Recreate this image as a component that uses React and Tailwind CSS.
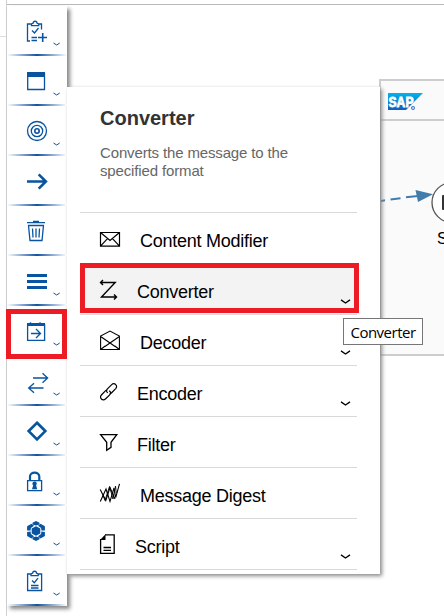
import React from "react";

const svgBase = { fill: "none", stroke: "currentColor", strokeWidth: 1.3 };

function ClipboardAddIcon() {
  return (
    <g>
      <path d="M7 6H3.5v17H6M14.5 6h3v5.5M7.5 7.6V6l1.7-.8C9.2 2.6 13 2.6 13 5.200l1.700.8v1.600z" />
      <path d="M8 12.500l2.500 2.500L14.500 10M7.500 19.500H13M7.500 22.500H13" />
      <path strokeWidth="1.600" d="M14 19.500h9M18.700 15v9" />
    </g>
  );
}

function WindowIcon() {
  return (
    <g>
      <path d="M3.700 5V21.500H20.500V5" />
      <path fill="currentColor" stroke="none" d="M3 4h18v5H3z" />
    </g>
  );
}

function TargetIcon() {
  return (
    <g>
      <circle cx="13" cy="13" r="9.500" />
      <circle cx="13" cy="13" r="5.700" />
      <circle cx="13" cy="13" r="2.200" strokeWidth="1.600" />
    </g>
  );
}

function ArrowIcon() {
  return <path strokeWidth="2.600" d="M3 13.500H22M14.700 6.300l7.200 7.200-7.200 7.200" />;
}

function TrashIcon() {
  return (
    <path d="M3 4.700h18M9 3.500h6M4 7.500h16M4.500 7.500L6 22.500h12L19.500 7.500M8.500 10.500l.5 9M12 10.500v9M15.500 10.500l-.5 9" />
  );
}

function LinesIcon() {
  return <path strokeWidth="3" d="M3 7.500h20M3 13.500h20M3 19.500h20" />;
}

function CalendarIcon() {
  return (
    <g>
      <path d="M3.600 6v16.400h17V6" />
      <path fill="currentColor" stroke="none" d="M3 5h2.500l1-1 1 1h7.500l1-1 1 1H21v3H3z" />
      <path d="M7 15.500h9.500M12 11l4.500 4.500L12 20" />
    </g>
  );
}

function SwapIcon() {
  return <path d="M9 10h15M18.500 5.300L23.600 10l-5.100 4.700M19.500 20H5M10 15.300L4.700 20l5.300 4.700" />;
}

function DiamondIcon() {
  return <path strokeWidth="2.700" d="M13 4.800l8.300 8.300L13 21.400l-8.300-8.300z" />;
}

function LockIcon() {
  return (
    <g>
      <path d="M3.600 12.600h14v10h-14z" />
      <path strokeWidth="2.200" d="M6 12V8.500c0-5.300 9.300-5.300 9.300 0V12" />
      <path fill="currentColor" stroke="none" d="M8.400 16a2.200 2.200 0 1 1 3.700 1.200l1.100 4H8l1.200-4a2 2 0 0 1-.8-1.200z" />
    </g>
  );
}

function HexClusterIcon() {
  return (
    <g fill="currentColor" stroke="none">
      <path d="M12 8.200l4.300 2.400v4.800L12 17.800l-4.300-2.400v-4.800z" />
      <path d="M12 3l3.500 1.800v1.700L12 7.600 8.500 6.500V4.800z" />
      <path d="M12 23l3.500-1.800v-1.700L12 18.400l-3.500 1.100v1.700z" />
      <path d="M7.500 5.800l2.500 2-3.100 2.300-.3 2.400H3.100V8.300z" />
      <path d="M16.500 5.800l-2.500 2 3.100 2.300.3 2.400h3.500V8.300z" />
      <path d="M7.500 20.500l2.500-2.200-3.100-2.300-.3-2.500-3.500.5v4z" />
      <path d="M16.500 20.500l-2.500-2.200 3.100-2.300.3-2.500 3.500.5v4z" />
    </g>
  );
}

function ClipboardIcon() {
  return (
    <g>
      <path d="M7 6H3.600v16.500h14V6H14M7 7.700V6l1.700-.8c0-2.600 3.800-2.600 3.800 0l1.700.8v1.700z" />
      <path d="M8 12.500l2.300 2.200L14 10.200M7 17.500h7.500M7 20h7.500" />
    </g>
  );
}

function MailIcon() {
  return <path d="M3.500 4.500h19v13.700h-19zM3.500 4.500l9.500 8 9.500-8M3.500 18.200l7-7.600M22.500 18.200l-7-7.600" strokeWidth="1.200" />;
}

function ZigzagIcon() {
  return <path strokeWidth="1.400" d="M3.800 3.500h14.400L4.500 18H19.300M6 1L3.500 3.500 6 6M17 15.500L19.500 18 17 20.500" />;
}

function OpenMailIcon() {
  return <path strokeWidth="1.100" d="M3.600 19.500h18.800V6L13 1 3.600 6zM3.600 6.500l14.500 10M22.400 6.500l-14.500 10M3.600 19.500l4.600-3.500M22.400 19.500L17.800 16" />;
}

function LinkIcon() {
  return (
    <g strokeWidth="1.200">
      <path d="M10.800 11.800c-1.600-1-1.700-2.600-.4-3.900L14.700 3.600c1.300-1.200 2.900-1.200 4 0 1.200 1.100 1.200 2.700 0 4L14.400 12c-.5.500-1.100.7-1.700.8" />
      <path d="M12.200 9.800c1.700 1 1.800 2.700.5 4L8.400 18c-1.300 1.200-2.900 1.200-4 0-1.200-1.100-1.200-2.700 0-4L8.600 9.700c.5-.5 1.100-.7 1.700-.7" />
    </g>
  );
}

function FunnelIcon() {
  return <path d="M3.600 2.700h16.200L14 10.300v5L9.700 18.200v-7.900z" />;
}

function DigestIcon() {
  return (
    <g strokeWidth="1.100">
      <path d="M3.300 18.500L9 6l4 12.500L17 5l1.700 9.500L22.500.8" />
      <path d="M3.200 6.500L8.800 17.500l4.200-13 5 11.500" />
      <path strokeWidth=".9" d="M6 12l2 5.500 4.500-14 3.500 12.500L18.500 3l.8 7" />
    </g>
  );
}

function ScriptIcon() {
  return (
    <g>
      <path d="M8 .8h9.200v18.500H3.600V5" />
      <path fill="currentColor" stroke="none" d="M3 6L8.500.3V6z" />
      <path d="M6.500 13.500h7.500M6.500 16.300h7.500" />
    </g>
  );
}

const tools = [
  { Icon: ClipboardAddIcon, more: true },
  { Icon: WindowIcon, more: true },
  { Icon: TargetIcon, more: true },
  { Icon: ArrowIcon },
  { Icon: TrashIcon },
  { Icon: LinesIcon, more: true },
  { Icon: CalendarIcon, more: true, marked: true },
  { Icon: SwapIcon, more: true },
  { Icon: DiamondIcon, more: true },
  { Icon: LockIcon, more: true },
  { Icon: HexClusterIcon, more: true },
  { Icon: ClipboardIcon, more: true },
];

const entries = [
  { label: "Content Modifier", Icon: MailIcon, pad: "pl-[19px]" },
  { label: "Converter", Icon: ZigzagIcon, pad: "pl-[16px]", more: true, marked: true },
  { label: "Decoder", Icon: OpenMailIcon, pad: "pl-[19px]", more: true },
  { label: "Encoder", Icon: LinkIcon, pad: "pl-[16px]", more: true },
  { label: "Filter", Icon: FunnelIcon, pad: "pl-[16px]" },
  { label: "Message Digest", Icon: DigestIcon, pad: "pl-[19px]" },
  { label: "Script", Icon: ScriptIcon, pad: "pl-[14px]", more: true },
];

function Tool({ Icon, more, marked }) {
  return (
    <div className="relative flex h-[50px] shrink-0 flex-col">
      <div className="flex h-12 pl-[17px] pt-3 text-[#0854a0]">
        <svg className="h-7 w-7 shrink-0" viewBox="0 0 28 28" {...svgBase}>
          <Icon />
        </svg>
        {more && (
          <svg className="mt-[24px] h-[5px] w-2 shrink-0" viewBox="0 0 8 5" {...svgBase} strokeWidth="1">
            <path d="M1.500 1L4.700 3l3-2" />
          </svg>
        )}
      </div>
      <div className="h-0.5 bg-linear-to-r from-white via-[#0854a0] to-white" />
      {marked && <div className="absolute -left-px top-[3px] z-10 h-[50px] w-[61px] border-5 border-[#ed1c24]" />}
    </div>
  );
}

function Entry({ label, Icon, pad, more, marked }) {
  return (
    <li className={"relative flex h-[51px] border-b border-[#d9d9d9] pl-[17px] " + (marked ? "bg-[#f3f3f3]" : "")}>
      <svg className="mt-[15px] h-6 w-6 shrink-0" viewBox="0 0 24 24" {...svgBase}>
        <Icon />
      </svg>
      <span className={"pt-[16px] text-[18px] leading-6 tracking-[-0.26px] whitespace-nowrap " + pad}>{label}</span>
      {more && (
        <svg className="ml-auto mr-[6px] mt-[35px] h-[6px] w-[11px]" viewBox="0 0 11 6" {...svgBase} strokeWidth="1.300">
          <path d="M1 .9L5.500 4 10 .9" />
        </svg>
      )}
      {marked && <div className="absolute -top-px left-0 h-[50px] w-[279px] border-5 border-[#ed1c24]" />}
    </li>
  );
}

function Canvas() {
  return (
    <div className="absolute left-[379px] top-[79px] h-[277px] w-[80px] border-2 border-[#cdcdcd] bg-[#fafafa]">
      <div className="flex h-[40px] items-start border-b-2 border-[#cdcdcd] pl-[7px] pt-[12px]">
        <svg className="h-[18px] w-[36px]" viewBox="0 0 36 18">
          <defs>
            <linearGradient id="brand" x1="0" y1="0" x2="0" y2="1">
              <stop offset="0" stopColor="#00b4ec" />
              <stop offset="1" stopColor="#185abd" />
            </linearGradient>
          </defs>
          <path fill="url(#brand)" d="M0 0h35L18 17H0z" />
          <text x=".5" y="13.600" fill="#fff" stroke="#fff" strokeWidth=".8" fontFamily="Liberation Sans, sans-serif" fontWeight="700" fontSize="14" textLength="25" lengthAdjust="spacingAndGlyphs">SAP</text>
          <circle cx="25" cy="15" r="1.700" fill="#a9c3ea" stroke="#3d75c9" strokeWidth=".8" />
        </svg>
      </div>
      <svg className="h-[130px] w-[63px]" viewBox="381 121 63 130">
        <path d="M377 201.500l8-1.200M390.500 199.500l10-1.300M406 197.300l12-1.300" stroke="#427cac" strokeWidth="2" />
        <path d="M415.500 190l17.500 4.300-15 7.700z" fill="#427cac" />
        <circle cx="452" cy="202.500" r="20" fill="#fff" stroke="#555" strokeWidth="1.300" />
        <rect x="442" y="195" width="10" height="15" rx="1" fill="#333" />
        <text x="437" y="244" fontFamily="Liberation Sans, sans-serif" fontSize="16">S</text>
      </svg>
    </div>
  );
}

export default function App() {
  return (
    <div className="relative flex h-[616px] w-[444px] overflow-hidden bg-white font-['Liberation_Sans',Arial,sans-serif] text-black">
      <div className="flex w-[7px] shrink-0 flex-col border-r border-[#d0d0d0]">
        <div className="h-[37px] border-b border-[#dedede]" />
      </div>
      <div className="h-[5px] flex-1 border-b border-[#b9b9b9]" />
      <Canvas />
      <div className="absolute left-[7px] top-[6px] flex items-start">
        <nav className="flex w-[60px] shrink-0 flex-col bg-white shadow-[3px_3px_4px_#888]">
          {tools.map((tool, i) => (
            <Tool key={i} {...tool} />
          ))}
        </nav>
        <section className="mt-[81px] flex h-[487px] w-[313px] flex-col bg-white pl-[13px] pr-[23px] shadow-[2px_2px_4px_#888]">
          <header className="h-[126px] shrink-0 border-b border-[#d9d9d9] pl-5 pt-[19px]">
            <h1 className="text-[20px] leading-6 font-bold text-[#333]">Converter</h1>
            <p className="mt-[14px] w-[210px] text-[15px] leading-[18px] tracking-[-0.14px] text-[#666]">
              Converts the message to the specified format
            </p>
          </header>
          <ul>
            {entries.map((entry) => (
              <Entry key={entry.label} {...entry} />
            ))}
          </ul>
        </section>
      </div>
      <div className="absolute left-[343px] top-[318px] flex h-[27px] w-[80px] items-center justify-center border border-[#767676] bg-white pt-px font-['Open_Sans','Noto_Sans',sans-serif] text-[15px] tracking-[-0.5px]">
        Converter
      </div>
    </div>
  );
}
